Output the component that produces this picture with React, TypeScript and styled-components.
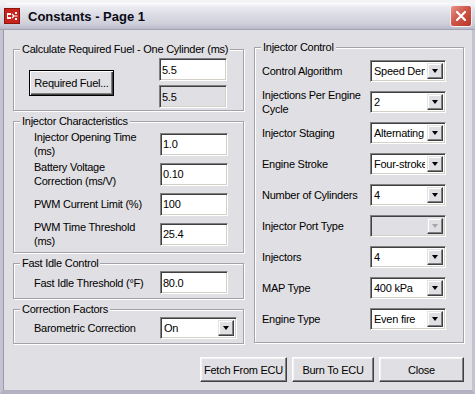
import styled, { createGlobalStyle } from "styled-components";

const FONT = `"Liberation Sans", Arial, sans-serif`;
const FACE = "#E0DFE3";

const GlobalStyle = createGlobalStyle`
  html, body {
    margin: 0;
    padding: 0;
    background: #f4f4f6;
  }
  body {
    width: 475px;
    height: 394px;
    overflow: hidden;
    font-family: ${FONT};
    font-size: 11px;
    letter-spacing: -0.25px;
    color: #000;
  }
`;

const Window = styled.div`
  margin-top: 3px;
  width: 475px;
  height: 391px;
  box-sizing: border-box;
  display: flex;
  flex-direction: column;
  background: ${FACE};
  border-left: 3px solid #c4c3d2;
  border-right: 3px solid #c4c3d2;
  border-bottom: 4px solid #b3b2c3;
  border-radius: 7px 7px 0 0;
  box-shadow: inset 1px 0 0 #9a99ac;
`;

const TitleBar = styled.div`
  height: 26px;
  margin: 0 -3px;
  display: flex;
  align-items: center;
  gap: 8px;
  padding: 0 4px 0 4px;
  border-radius: 7px 7px 0 0;
  background: linear-gradient(
    to bottom,
    #ffffff 0%,
    #ececf2 12%,
    #dcdce5 45%,
    #cfcfdb 80%,
    #b9b8c9 100%
  );
  border-bottom: 1px solid #a4a3b5;
`;

const Title = styled.div`
  flex: 1;
  font-weight: bold;
  font-size: 13px;
  letter-spacing: 0;
  color: #0a0a14;
`;

const CloseButton = styled.div`
  width: 20px;
  height: 20px;
  border-radius: 3px;
  border: 1px solid #f3f3f3;
  background: linear-gradient(135deg, #e8958a 0%, #d0574a 45%, #b83526 100%);
  display: flex;
  align-items: center;
  justify-content: center;
  margin-right: -1px;
`;

const Client = styled.div`
  flex: 1;
  display: flex;
  flex-direction: column;
  padding: 10px 8px 0 10px;
`;

const Columns = styled.div`
  display: grid;
  grid-template-columns: 231px 210px;
  column-gap: 10px;
  align-items: start;
`;

const Stack = styled.div`
  display: flex;
  flex-direction: column;
  gap: 3px;
  padding-top: 2px;
`;

const Group = styled.fieldset`
  margin: 0;
  padding: 0;
  min-width: 0;
  border: 1px solid #a3a2a8;
  box-shadow: 1px 1px 0 #fff, inset 1px 1px 0 #fff;
`;

const Legend = styled.legend`
  margin-left: 6px;
  padding: 0 2px;
  line-height: 14px;
  white-space: nowrap;
  background: ${FACE};
`;

const GroupBody = styled.div<{ $pad: string }>`
  padding: ${({ $pad }) => $pad};
  display: flex;
  flex-direction: column;
`;

const Row = styled.div<{ $h: number; $label: number }>`
  height: ${({ $h }) => $h}px;
  display: grid;
  grid-template-columns: ${({ $label }) => $label}px auto;
  align-items: center;
`;

const Label = styled.div`
  line-height: 14px;
  white-space: nowrap;
`;

const FuelRow = styled.div`
  display: grid;
  grid-template-columns: 1fr 68px;
  align-items: center;
`;

const InputStack = styled.div`
  display: flex;
  flex-direction: column;
  gap: 4px;
`;

const TextBox = styled.div<{ $disabled?: boolean }>`
  width: 68px;
  height: 23px;
  box-sizing: border-box;
  padding: 1px 2px;
  display: flex;
  align-items: center;
  background: ${({ $disabled }) => ($disabled ? FACE : "#fff")};
  border: 1px solid;
  border-color: #808080 #fff #fff #808080;
  box-shadow: inset 1px 1px 0 #404040, inset -1px -1px 0 #d4d0c8;
  line-height: 14px;
`;

const Select = styled.div<{ $disabled?: boolean; $w?: number }>`
  width: ${({ $w }) => $w || 76}px;
  height: 22px;
  box-sizing: border-box;
  padding: 2px 2px 2px 3px;
  display: flex;
  align-items: center;
  gap: 2px;
  background: ${({ $disabled }) => ($disabled ? FACE : "#fff")};
  border: 1px solid;
  border-color: #808080 #fff #fff #808080;
  box-shadow: inset 1px 1px 0 #404040, inset -1px -1px 0 #d4d0c8;
`;

const SelectText = styled.div`
  flex: 1;
  min-width: 0;
  overflow: hidden;
  white-space: nowrap;
  line-height: 14px;
`;

const DropButton = styled.div<{ $disabled?: boolean }>`
  width: 16px;
  height: 16px;
  flex-shrink: 0;
  box-sizing: border-box;
  display: flex;
  align-items: center;
  justify-content: center;
  background: ${FACE};
  border: 1px solid;
  border-color: #e3e3e3 #404040 #404040 #e3e3e3;
  box-shadow: inset -1px -1px 0 #808080, inset 1px 1px 0 #fff;

  &::after {
    content: "";
    border-left: 3.5px solid transparent;
    border-right: 3.5px solid transparent;
    border-top: 4px solid ${({ $disabled }) => ($disabled ? "#a6a5ab" : "#000")};
  }
`;

const Button = styled.div<{ $w: number; $h?: number; $default?: boolean }>`
  width: ${({ $w }) => $w}px;
  height: ${({ $h }) => $h || 25}px;
  box-sizing: border-box;
  display: flex;
  align-items: center;
  justify-content: center;
  white-space: nowrap;
  background: ${FACE};
  border: 1px solid;
  border-color: ${({ $default }) =>
    $default ? "#000" : "#fff #404040 #404040 #fff"};
  box-shadow: ${({ $default }) =>
    $default
      ? "inset 1px 1px 0 #fff, inset -1px -1px 0 #404040, inset -2px -2px 0 #808080"
      : "inset -1px -1px 0 #808080, inset 1px 1px 0 #f4f4f4"};
  margin-left: ${({ $default }) => ($default ? "15px" : "0")};
`;

const Footer = styled.div`
  display: flex;
  justify-content: flex-end;
  margin-top: 13px;
  gap: 5px;
`;

function AppIcon() {
  return (
    <svg width="16" height="16" viewBox="0 0 16 16">
      <rect x="0.5" y="0.5" width="15" height="15" fill="#c8231c" stroke="#8e1410" />
      <path d="M3 5h4v2H4v2h3v2H3z" fill="#fff" />
      <path d="M8 6l2 2-2 2" stroke="#fff" strokeWidth="1.2" fill="none" />
      <path d="M11 4h2v2h-2zM11 10h2v2h-2z" fill="#fff" />
      <path d="M10.5 8h3" stroke="#fff" strokeWidth="1" />
    </svg>
  );
}

function CloseIcon() {
  return (
    <svg width="12" height="12" viewBox="0 0 12 12">
      <path d="M2 2l8 8M10 2l-8 8" stroke="#fff" strokeWidth="2.2" strokeLinecap="round" />
    </svg>
  );
}

type SelProps = { value: string; disabled?: boolean; w?: number };

function Combo({ value, disabled, w }: SelProps) {
  return (
    <Select $disabled={disabled} $w={w}>
      <SelectText>{value}</SelectText>
      <DropButton $disabled={disabled} />
    </Select>
  );
}

const injectorRows = [
  { label: ["Injector Opening Time", "(ms)"], value: "1.0" },
  { label: ["Battery Voltage", "Correction (ms/V)"], value: "0.10" },
  { label: ["PWM Current Limit (%)"], value: "100" },
  { label: ["PWM Time Threshold", "(ms)"], value: "25.4" },
];

const controlRows = [
  { label: ["Control Algorithm"], value: "Speed Density" },
  { label: ["Injections Per Engine", "Cycle"], value: "2" },
  { label: ["Injector Staging"], value: "Alternating" },
  { label: ["Engine Stroke"], value: "Four-stroke" },
  { label: ["Number of Cylinders"], value: "4" },
  { label: ["Injector Port Type"], value: "", disabled: true },
  { label: ["Injectors"], value: "4" },
  { label: ["MAP Type"], value: "400 kPa" },
  { label: ["Engine Type"], value: "Even fire" },
];

export default function App() {
  return (
    <>
      <GlobalStyle />
      <Window>
        <TitleBar>
          <AppIcon />
          <Title>Constants - Page 1</Title>
          <CloseButton>
            <CloseIcon />
          </CloseButton>
        </TitleBar>
        <Client>
          <Columns>
            <Stack>
              <Group>
                <Legend>Calculate Required Fuel - One Cylinder (ms)</Legend>
                <GroupBody $pad="2px 16px 2px 0">
                  <FuelRow>
                    <Button $w={85} $h={26} $default>
                      Required Fuel...
                    </Button>
                    <InputStack>
                      <TextBox>5.5</TextBox>
                      <TextBox $disabled>5.5</TextBox>
                    </InputStack>
                  </FuelRow>
                </GroupBody>
              </Group>

              <Group>
                <Legend>Injector Characteristics</Legend>
                <GroupBody $pad="1px 0 3px 20px">
                  {injectorRows.map((r) => (
                    <Row key={r.value} $h={30} $label={126}>
                      <Label>
                        {r.label.map((l) => (
                          <div key={l}>{l}</div>
                        ))}
                      </Label>
                      <TextBox>{r.value}</TextBox>
                    </Row>
                  ))}
                </GroupBody>
              </Group>

              <Group>
                <Legend>Fast Idle Control</Legend>
                <GroupBody $pad="1px 0 4px 20px">
                  <Row $h={23} $label={126}>
                    <Label>Fast Idle Threshold (°F)</Label>
                    <TextBox>80.0</TextBox>
                  </Row>
                </GroupBody>
              </Group>

              <Group>
                <Legend>Correction Factors</Legend>
                <GroupBody $pad="1px 0 4px 20px">
                  <Row $h={22} $label={126}>
                    <Label>Barometric Correction</Label>
                    <Combo value="On" w={77} />
                  </Row>
                </GroupBody>
              </Group>
            </Stack>

            <Group>
              <Legend>Injector Control</Legend>
              <GroupBody $pad="1px 0 8px 7px">
                {controlRows.map((r) => (
                  <Row key={r.label[0]} $h={31} $label={108}>
                    <Label>
                      {r.label.map((l) => (
                        <div key={l}>{l}</div>
                      ))}
                    </Label>
                    <Combo value={r.value} disabled={r.disabled} />
                  </Row>
                ))}
              </GroupBody>
            </Group>
          </Columns>

          <Footer>
            <Button $w={87}>Fetch From ECU</Button>
            <Button $w={82}>Burn To ECU</Button>
            <Button $w={85}>Close</Button>
          </Footer>
        </Client>
      </Window>
    </>
  );
}
